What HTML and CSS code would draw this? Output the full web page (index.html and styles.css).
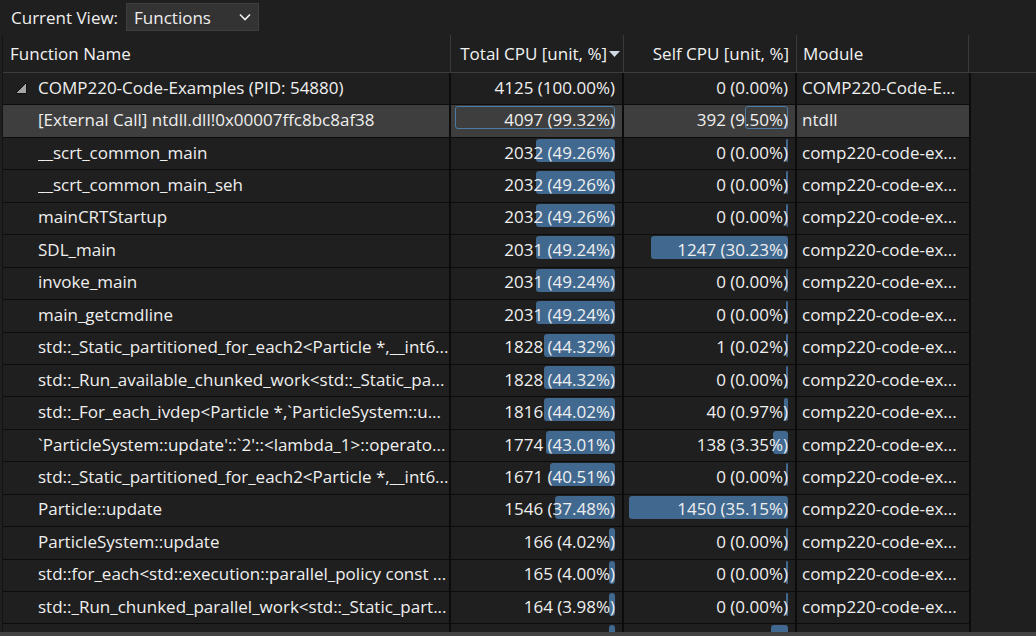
FILE: index.html
```html
<!DOCTYPE html>
<html lang="en">
<head>
<meta charset="utf-8">
<title>CPU Usage - Functions</title>
<link rel="stylesheet" href="styles.css">
</head>
<body>
<div class="toolbar">
  <span class="label">Current View:</span>
  <div class="select">
    <span>Functions</span>
    <svg class="chev" width="12" height="8" viewBox="0 0 12 8"><path d="M1 1.5 L6 6.5 L11 1.5" fill="none" stroke="#f0f0f0" stroke-width="1.6"/></svg>
  </div>
</div>
<div class="table">
  <div class="hdr">
    <div class="hc name">Function Name</div>
    <div class="hc num">Total CPU [unit, %]<svg class="sort" width="11" height="6" viewBox="0 0 11 6"><path d="M0 0 H11 L5.5 6 Z" fill="#cfd8e2"/></svg></div>
    <div class="hc num">Self CPU [unit, %]</div>
    <div class="hc mod">Module</div>
    <div class="hc fill"></div>
  </div>
  <div class="rows">
    <div class="row">
      <div class="c name"><svg class="tri" width="14" height="14" viewBox="0 0 14 14"><path d="M12.5 1.5 V12.5 H1.5 Z" fill="#a6a6a6" stroke="#141414" stroke-width="1"/></svg><span class="txt">COMP220-Code-Examples (PID: 54880)</span></div>
      <div class="c num"><span class="v">4125 (100.00%)</span></div>
      <div class="c num"><span class="v">0 (0.00%)</span></div>
      <div class="c mod">COMP220-Code-E...</div>
    </div>
    <div class="row sel">
      <div class="c name"><span class="txt">[External Call] ntdll.dll!0x00007ffc8bc8af38</span></div>
      <div class="c num"><i class="bar ol" style="width:160px"></i><span class="v">4097 (99.32%)</span></div>
      <div class="c num"><i class="bar ol" style="width:43px"></i><span class="v">392 (9.50%)</span></div>
      <div class="c mod">ntdll</div>
    </div>
    <div class="row">
      <div class="c name"><span class="txt">__scrt_common_main</span></div>
      <div class="c num"><i class="bar" style="width:79px"></i><span class="v">2032 (49.26%)</span></div>
      <div class="c num"><i class="bar" style="width:2px"></i><span class="v">0 (0.00%)</span></div>
      <div class="c mod">comp220-code-ex...</div>
    </div>
    <div class="row">
      <div class="c name"><span class="txt">__scrt_common_main_seh</span></div>
      <div class="c num"><i class="bar" style="width:79px"></i><span class="v">2032 (49.26%)</span></div>
      <div class="c num"><i class="bar" style="width:2px"></i><span class="v">0 (0.00%)</span></div>
      <div class="c mod">comp220-code-ex...</div>
    </div>
    <div class="row">
      <div class="c name"><span class="txt">mainCRTStartup</span></div>
      <div class="c num"><i class="bar" style="width:79px"></i><span class="v">2032 (49.26%)</span></div>
      <div class="c num"><i class="bar" style="width:2px"></i><span class="v">0 (0.00%)</span></div>
      <div class="c mod">comp220-code-ex...</div>
    </div>
    <div class="row">
      <div class="c name"><span class="txt">SDL_main</span></div>
      <div class="c num"><i class="bar" style="width:79px"></i><span class="v">2031 (49.24%)</span></div>
      <div class="c num"><i class="bar" style="width:137px"></i><span class="v">1247 (30.23%)</span></div>
      <div class="c mod">comp220-code-ex...</div>
    </div>
    <div class="row">
      <div class="c name"><span class="txt">invoke_main</span></div>
      <div class="c num"><i class="bar" style="width:79px"></i><span class="v">2031 (49.24%)</span></div>
      <div class="c num"><i class="bar" style="width:2px"></i><span class="v">0 (0.00%)</span></div>
      <div class="c mod">comp220-code-ex...</div>
    </div>
    <div class="row">
      <div class="c name"><span class="txt">main_getcmdline</span></div>
      <div class="c num"><i class="bar" style="width:79px"></i><span class="v">2031 (49.24%)</span></div>
      <div class="c num"><i class="bar" style="width:2px"></i><span class="v">0 (0.00%)</span></div>
      <div class="c mod">comp220-code-ex...</div>
    </div>
    <div class="row">
      <div class="c name"><span class="txt">std::_Static_partitioned_for_each2&lt;Particle *,__int6...</span></div>
      <div class="c num"><i class="bar" style="width:71px"></i><span class="v">1828 (44.32%)</span></div>
      <div class="c num"><i class="bar" style="width:2px"></i><span class="v">1 (0.02%)</span></div>
      <div class="c mod">comp220-code-ex...</div>
    </div>
    <div class="row">
      <div class="c name"><span class="txt">std::_Run_available_chunked_work&lt;std::_Static_pa...</span></div>
      <div class="c num"><i class="bar" style="width:71px"></i><span class="v">1828 (44.32%)</span></div>
      <div class="c num"><i class="bar" style="width:2px"></i><span class="v">0 (0.00%)</span></div>
      <div class="c mod">comp220-code-ex...</div>
    </div>
    <div class="row">
      <div class="c name"><span class="txt">std::_For_each_ivdep&lt;Particle *,`ParticleSystem::u...</span></div>
      <div class="c num"><i class="bar" style="width:71px"></i><span class="v">1816 (44.02%)</span></div>
      <div class="c num"><i class="bar" style="width:4px"></i><span class="v">40 (0.97%)</span></div>
      <div class="c mod">comp220-code-ex...</div>
    </div>
    <div class="row">
      <div class="c name"><span class="txt">`ParticleSystem::update'::`2'::&lt;lambda_1&gt;::operato...</span></div>
      <div class="c num"><i class="bar" style="width:69px"></i><span class="v">1774 (43.01%)</span></div>
      <div class="c num"><i class="bar" style="width:15px"></i><span class="v">138 (3.35%)</span></div>
      <div class="c mod">comp220-code-ex...</div>
    </div>
    <div class="row">
      <div class="c name"><span class="txt">std::_Static_partitioned_for_each2&lt;Particle *,__int6...</span></div>
      <div class="c num"><i class="bar" style="width:65px"></i><span class="v">1671 (40.51%)</span></div>
      <div class="c num"><i class="bar" style="width:2px"></i><span class="v">0 (0.00%)</span></div>
      <div class="c mod">comp220-code-ex...</div>
    </div>
    <div class="row">
      <div class="c name"><span class="txt">Particle::update</span></div>
      <div class="c num"><i class="bar" style="width:60px"></i><span class="v">1546 (37.48%)</span></div>
      <div class="c num"><i class="bar" style="width:159px"></i><span class="v">1450 (35.15%)</span></div>
      <div class="c mod">comp220-code-ex...</div>
    </div>
    <div class="row">
      <div class="c name"><span class="txt">ParticleSystem::update</span></div>
      <div class="c num"><i class="bar" style="width:6px"></i><span class="v">166 (4.02%)</span></div>
      <div class="c num"><i class="bar" style="width:2px"></i><span class="v">0 (0.00%)</span></div>
      <div class="c mod">comp220-code-ex...</div>
    </div>
    <div class="row">
      <div class="c name"><span class="txt">std::for_each&lt;std::execution::parallel_policy const ...</span></div>
      <div class="c num"><i class="bar" style="width:6px"></i><span class="v">165 (4.00%)</span></div>
      <div class="c num"><i class="bar" style="width:2px"></i><span class="v">0 (0.00%)</span></div>
      <div class="c mod">comp220-code-ex...</div>
    </div>
    <div class="row">
      <div class="c name"><span class="txt">std::_Run_chunked_parallel_work&lt;std::_Static_part...</span></div>
      <div class="c num"><i class="bar" style="width:6px"></i><span class="v">164 (3.98%)</span></div>
      <div class="c num"><i class="bar" style="width:2px"></i><span class="v">0 (0.00%)</span></div>
      <div class="c mod">comp220-code-ex...</div>
    </div>
    <div class="row">
      <div class="c name"><span class="txt">[External Call] vcruntime64.dll!0x00007ffb4c6bd667</span></div>
      <div class="c num"><i class="bar" style="width:6px"></i><span class="v">157 (3.81%)</span></div>
      <div class="c num"><i class="bar" style="width:17px"></i><span class="v">157 (3.81%)</span></div>
      <div class="c mod">vcruntime64</div>
    </div>
  </div>
</div>
<div class="hscroll"></div>
</body>
</html>
```
FILE: styles.css
```css
html, body {
  margin: 0;
  padding: 0;
  height: 636px;
  overflow: hidden;
  background: #1f1f1f;
}
body {
  display: flex;
  flex-direction: column;
  font-family: "Open Sans", "Liberation Sans", sans-serif;
  font-size: 17px;
  color: #efefef;
}
.toolbar {
  height: 35px;
  flex: none;
  display: flex;
  align-items: center;
  padding-left: 11px;
  gap: 8px;
  box-sizing: border-box;
  padding-bottom: 1px;
}
.select {
  width: 133px;
  height: 28px;
  box-sizing: border-box;
  background: #333333;
  border: 1px solid #3e3e3e;
  display: flex;
  align-items: center;
  justify-content: space-between;
  padding: 0 7px 0 7px;
}
.chev { display: block; }
.table {
  flex: 1;
  min-height: 0;
  overflow: hidden;
  display: flex;
  flex-direction: column;
  margin-left: 2px;
  border-left: 1px solid #141414;
}
.hdr {
  flex: none;
  height: 38px;
  display: grid;
  grid-template-columns: 448px 173px 173px 172px 1fr;
  border-bottom: 1px solid #3c3c3c;
  box-sizing: border-box;
}
.hc {
  display: flex;
  align-items: center;
  border-right: 1px solid #3a3a3a;
  padding: 0 7px;
  white-space: nowrap;
  overflow: hidden;
  color: #f2f2f2;
}
.hc.name { padding-left: 7px; }
.hc.num { justify-content: flex-end; }
.hc.mod { padding-left: 6px; }
.hc.fill { border-right: none; }
.sort { margin-left: 2px; margin-right: -4px; margin-top: 1px; flex: none; }
.rows {
  flex: 1;
  min-height: 0;
  overflow: hidden;
}
.row {
  width: 968px;
  height: 32.45px;
  box-sizing: border-box;
  display: grid;
  grid-template-columns: 448px 173px 173px 174px;
  border-bottom: 1px solid #0c0c0c;
}
.row.sel { background: #3e3e3e; }
.c {
  position: relative;
  display: flex;
  align-items: center;
  border-right: 2px solid #0c0c0c;
  white-space: nowrap;
  overflow: hidden;
  min-width: 0;
  padding-bottom: 3px;
}
.c.name { padding-left: 35px; box-sizing: border-box; }
.c.num { justify-content: flex-end; padding-right: 7px; }
.c.mod { padding-left: 5px; }
.tri { position: absolute; left: 11px; top: 8px; }
.txt { overflow: hidden; text-overflow: ellipsis; }
.v { position: relative; }
.bar {
  position: absolute;
  right: 7px;
  top: 1px;
  height: 23px;
  background: #41698f;
  border-radius: 3px;
  box-sizing: border-box;
}
.bar.ol {
  background: transparent;
  border: 1px solid #4a7aa6;
}
.hscroll {
  flex: none;
  height: 4px;
  background: #424242;
}
```
